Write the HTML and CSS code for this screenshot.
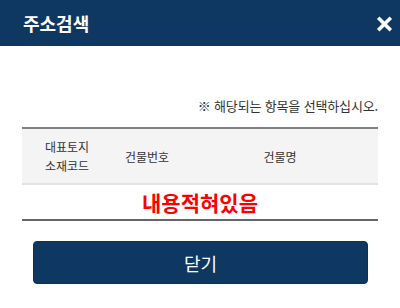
FILE: index.html
```html
<!DOCTYPE html>
<html lang="ko">
<head>
<meta charset="utf-8">
<link rel="stylesheet" href="styles.css">
</head>
<body>
<div class="popup">
  <header class="popup-header">
    <h1 class="popup-title">주소검색</h1>
    <button class="popup-close" aria-label="닫기">
      <svg width="17" height="16" viewBox="0 0 17 16"><path d="M2.2 1.7 L14.8 14.3 M14.8 1.7 L2.2 14.3" stroke="#fff" stroke-width="3.6" stroke-linecap="butt"/></svg>
    </button>
  </header>
  <main class="popup-body">
    <p class="notice">※ 해당되는 항목을 선택하십시오.</p>
    <table class="result-table">
      <colgroup><col class="c1"><col class="c2"><col class="c3"></colgroup>
      <thead>
        <tr><th>대표토지<br>소재코드</th><th>건물번호</th><th>건물명</th></tr>
      </thead>
      <tbody>
        <tr><td colspan="3" class="placeholder">내용적혀있음</td></tr>
      </tbody>
    </table>
    <div class="actions"><button class="btn-close">닫기</button></div>
  </main>
</div>
</body>
</html>
```
FILE: styles.css
```css
* { box-sizing: border-box; }
html, body { margin: 0; padding: 0; background: #fff; }
body { font-family: "Noto Sans CJK KR", "Noto Sans", sans-serif; color: #333; }
.popup-header {
  height: 46px;
  background: #0e3862;
  display: flex;
  align-items: center;
  justify-content: space-between;
  padding: 0 7px 0 23px;
}
.popup-title {
  margin: 0;
  color: #fff;
  font-size: 18px;
  font-weight: 700;
  letter-spacing: 0;
  line-height: 1;
}
.popup-close {
  border: 0; background: none; padding: 0; margin: 0;
  width: 17px; height: 16px; display: block; margin-top: 1px;
}
.popup-close svg { display: block; }
.popup-body { padding: 0 22px; }
.notice {
  margin: 51px 0 13px;
  text-align: right;
  font-size: 13px;
  line-height: 17px;
  color: #333;
  letter-spacing: -0.15px;
}
.result-table {
  width: 100%;
  border-collapse: collapse;
  table-layout: fixed;
  border-top: 2px solid #808080;
}
.c1 { width: 90px; }
.c2 { width: 70px; }
.result-table th {
  background: #f4f4f4;
  height: 56px;
  font-size: 12px;
  font-weight: 400;
  line-height: 19px;
  color: #333;
  border-bottom: 2px solid #e3e3e3;
  padding: 0;
  text-align: center;
  vertical-align: middle;
}
.result-table td {
  height: 36px;
  border-bottom: 2px solid #666;
  padding: 0;
}
.placeholder {
  text-align: center;
  color: #ff0000;
  font-size: 21px;
  font-weight: 700;
  letter-spacing: 0;
}
.actions { padding: 20px 10px 0 11px; }
.btn-close {
  display: block;
  width: 100%;
  height: 43px;
  border: 1px solid #0b3157;
  border-radius: 4px;
  background: #0e3862;
  color: #fff;
  font-family: inherit;
  font-size: 18px;
  line-height: 1;
  cursor: pointer;
}
```
